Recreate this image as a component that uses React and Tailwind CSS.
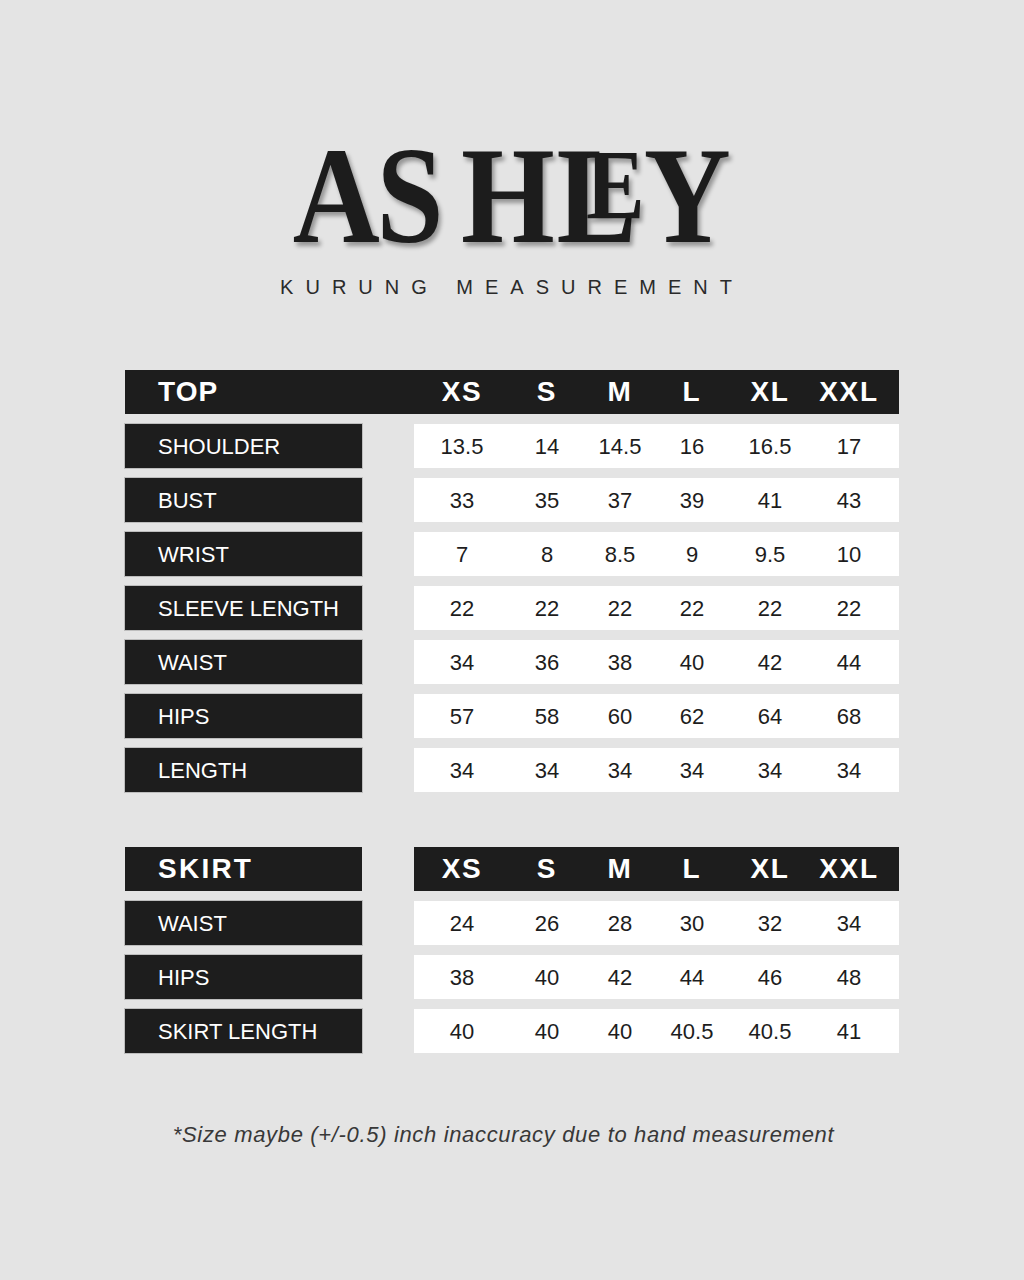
const sizes = ["XS", "S", "M", "L", "XL", "XXL"];

const top = [
  { label: "SHOULDER", values: ["13.5", "14", "14.5", "16", "16.5", "17"] },
  { label: "BUST", values: ["33", "35", "37", "39", "41", "43"] },
  { label: "WRIST", values: ["7", "8", "8.5", "9", "9.5", "10"] },
  { label: "SLEEVE LENGTH", values: ["22", "22", "22", "22", "22", "22"] },
  { label: "WAIST", values: ["34", "36", "38", "40", "42", "44"] },
  { label: "HIPS", values: ["57", "58", "60", "62", "64", "68"] },
  { label: "LENGTH", values: ["34", "34", "34", "34", "34", "34"] },
];

const skirt = [
  { label: "WAIST", values: ["24", "26", "28", "30", "32", "34"] },
  { label: "HIPS", values: ["38", "40", "42", "44", "46", "48"] },
  { label: "SKIRT LENGTH", values: ["40", "40", "40", "40.5", "40.5", "41"] },
];

const cols = "grid grid-cols-[96px_74px_72px_72px_84px_74px] h-full items-center";

function SizeCells() {
  return (
    <div className={cols}>
      {sizes.map((s) => (
        <span key={s} className="text-center text-[28px] font-bold tracking-[0.06em] text-white">
          {s}
        </span>
      ))}
    </div>
  );
}

function Row({ label, values }) {
  return (
    <div className="flex h-[44px] gap-[52px]">
      <div className="flex w-[237px] items-center bg-[#1d1d1d] pl-[33px] text-[22px] text-white shadow-[0_0_0_1px_#bdbdbd]">
        {label}
      </div>
      <div className="flex-1 bg-white">
        <div className={cols}>
          {values.map((v, i) => (
            <span key={i} className="text-center text-[22px] text-[#1d1d1d]">
              {v}
            </span>
          ))}
        </div>
      </div>
    </div>
  );
}

export default function App() {
  return (
    <div className="flex h-[1280px] w-[1024px] flex-col items-center bg-[#e4e4e4] pt-[128px] font-['Liberation_Sans',Arial,sans-serif]">
      {/* Logo */}
      <div className="flex h-[137px] items-start font-['Liberation_Serif',serif] font-bold leading-none text-[#1c1c1c] [text-shadow:3px_4px_5px_rgba(0,0,0,0.35)] scale-x-[0.88]">
        <span className="text-[137px]">A</span>
        <span className="-ml-[4px] text-[137px]">S</span>
        <span className="ml-[20px] text-[137px]">H</span>
        <span className="ml-[2px] text-[137px]">L</span>
        <span className="-ml-[58px] mt-[7px] text-[100px]">E</span>
        <span className="-ml-[1px] text-[137px]">Y</span>
      </div>

      <div className="mt-[12px] text-[20px] leading-none tracking-[0.6em] text-[#2a2a2a]">
        KURUNG MEASUREMENT
      </div>

      {/* Top */}
      <div className="mt-[73px] flex w-[774px] flex-col gap-[10px]">
        <div className="flex h-[44px] bg-[#1d1d1d]">
          <div className="flex w-[289px] items-center pl-[33px] text-[28px] font-bold tracking-[0.04em] text-white">
            TOP
          </div>
          <div className="flex-1">
            <SizeCells />
          </div>
        </div>
        {top.map((r) => (
          <Row key={r.label} {...r} />
        ))}
      </div>

      {/* Skirt */}
      <div className="mt-[55px] flex w-[774px] flex-col gap-[10px]">
        <div className="flex h-[44px] gap-[52px]">
          <div className="flex w-[237px] items-center bg-[#1d1d1d] pl-[33px] text-[28px] font-bold tracking-[0.08em] text-white">
            SKIRT
          </div>
          <div className="flex-1 bg-[#1d1d1d]">
            <SizeCells />
          </div>
        </div>
        {skirt.map((r) => (
          <Row key={r.label} {...r} />
        ))}
      </div>

      <p className="mt-[65px] mr-[17px] text-[22px] italic tracking-[0.03em] text-[#383838]">
        *Size maybe (+/-0.5) inch inaccuracy due to hand measurement
      </p>
    </div>
  );
}
